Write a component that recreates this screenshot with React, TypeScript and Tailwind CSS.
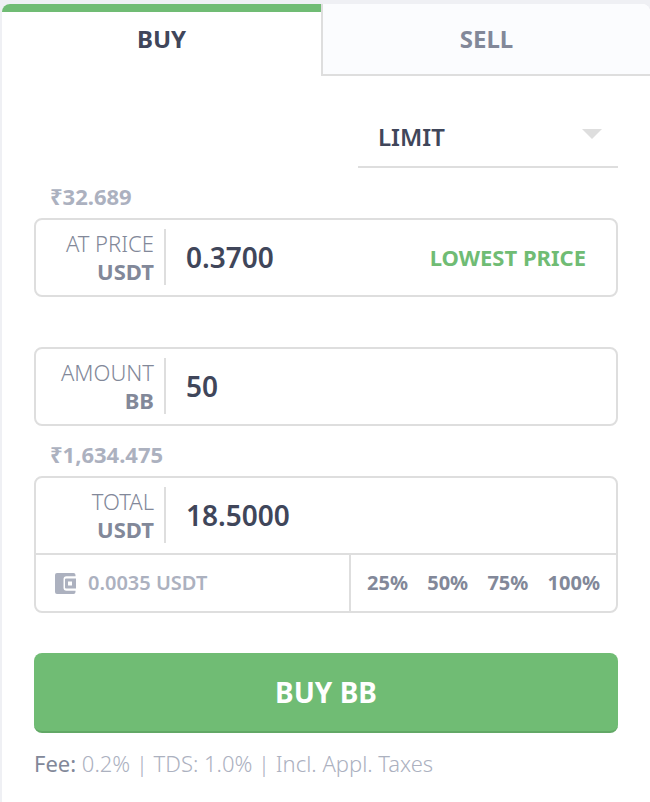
import React, { useState } from 'react';

interface FieldProps {
  id: string;
  label: string;
  unit: string;
  value: string;
  onChange: (value: string) => void;
  children?: React.ReactNode;
}

const PERCENTAGES = [25, 50, 75, 100];

const Field: React.FC<FieldProps> = ({ id, label, unit, value, onChange, children }) => (
  <div className="flex items-center pt-[9px] pb-2.5">
    <label
      htmlFor={id}
      className="w-[130px] shrink-0 pr-2.5 border-r-2 border-[#dedede] text-right text-[22px] leading-7 text-[#828899]"
    >
      <span className="block font-light">{label}</span>
      <span className="block font-bold">{unit}</span>
    </label>
    <input
      id={id}
      type="text"
      inputMode="decimal"
      value={value}
      onChange={e => onChange(e.target.value)}
      className="flex-1 min-w-0 pl-5 bg-transparent outline-none text-[28px] leading-9 font-semibold text-[#40465a]"
    />
    {children}
  </div>
);

const WalletIcon = () => (
  <svg width="21" height="21" viewBox="0 0 21 21" aria-hidden="true">
    <path
      fill="#acb1bf"
      fillRule="evenodd"
      d="M2 0h16.500a2 2 0 0 1 2 2v1.200H11.500a3 3 0 0 0-3 3v8.600a3 3 0 0 0 3 3h9V19a2 2 0 0 1-2 2H2a2 2 0 0 1-2-2V2a2 2 0 0 1 2-2zM11 5.500h10v10H11a1 1 0 0 1-1-1v-8a1 1 0 0 1 1-1zM13 8.500v4h4v-4z"
    />
  </svg>
);

export default function App() {
  const [side, setSide] = useState<'BUY' | 'SELL'>('BUY');
  const [orderType, setOrderType] = useState('LIMIT');
  const [price, setPrice] = useState('0.3700');
  const [amount, setAmount] = useState('50');
  const [total, setTotal] = useState('18.5000');

  const tabClass = (tab: 'BUY' | 'SELL') =>
    side === tab
      ? 'border-t-8 border-[#70bc74] text-[#40465a] pb-2.5'
      : `border-b-2 border-[#dedede] bg-[#fbfcfe] text-[#828899] ${tab === 'SELL' ? 'border-l-2' : 'border-r-2'}`;

  return (
    <div className="min-h-screen flex flex-col bg-[#eff0f4] pt-1 pl-0.5 font-['Noto_Sans',sans-serif]">
      <div className="flex-1 bg-white rounded-t-lg overflow-hidden">
        <div className="grid grid-cols-[319fr_329fr] h-18">
          <button type="button" onClick={() => setSide('BUY')} className={`text-2xl font-bold ${tabClass('BUY')}`}>
            BUY
          </button>
          <button type="button" onClick={() => setSide('SELL')} className={`text-2xl font-bold ${tabClass('SELL')}`}>
            SELL
          </button>
        </div>

        <form className="px-8 pt-8 pb-6" onSubmit={e => e.preventDefault()}>
          <div className="relative w-[260px] ml-auto">
            <select
              aria-label="Order type"
              value={orderType}
              onChange={e => setOrderType(e.target.value)}
              className="block w-full h-15 pl-5 pr-12 appearance-none bg-transparent outline-none border-b-2 border-[#dedede] text-2xl font-semibold text-[#40465a]"
            >
              <option value="LIMIT">LIMIT</option>
              <option value="MARKET">MARKET</option>
            </select>
            <svg className="absolute right-4 top-5 pointer-events-none" width="20" height="12" viewBox="0 0 20 12" aria-hidden="true">
              <path d="M0 1h20L10 11z" fill="#dedede" />
            </svg>
          </div>

          <p className="pt-3.5 pb-2 pl-4 text-[22px] leading-7 font-bold text-[#acb1bf]">₹32.689</p>
          <div className="border-2 border-[#dedede] rounded-lg">
            <Field id="price" label="AT PRICE" unit="USDT" value={price} onChange={setPrice}>
              <button type="button" onClick={() => setPrice('0.3700')} className="shrink-0 pr-[30px] text-[22px] leading-7 font-bold text-[#70bc74]">
                LOWEST PRICE
              </button>
            </Field>
          </div>

          <div className="mt-[50px] border-2 border-[#dedede] rounded-lg">
            <Field id="amount" label="AMOUNT" unit="BB" value={amount} onChange={setAmount} />
          </div>

          <p className="pt-3.5 pb-2 pl-4 text-[22px] leading-7 font-bold text-[#acb1bf]">₹1,634.475</p>
          <div className="border-2 border-[#dedede] rounded-lg">
            <Field id="total" label="TOTAL" unit="USDT" value={total} onChange={setTotal} />
            <div className="flex h-[58px] border-t-2 border-[#dedede] text-xl">
              <div className="flex-1 flex items-center gap-3 pl-[19px] font-semibold text-[#acb1bf]">
                <WalletIcon />
                <span>0.0035 USDT</span>
              </div>
              <div className="w-[267px] flex items-center justify-between px-4 border-l-2 border-[#dedede] font-bold text-[#828899]">
                {PERCENTAGES.map(pct => (
                  <button key={pct} type="button">{pct}%</button>
                ))}
              </div>
            </div>
          </div>

          <button
            type="submit"
            className="block w-full h-20 mt-10 rounded-lg bg-[#70bc74] border-b-2 border-[#62a866] text-[28px] leading-9 font-bold text-white"
          >
            {side} BB
          </button>

          <p className="mt-4 text-[22px] leading-7 font-light text-[#acb1bf]">
            <span className="font-normal text-[#828899]">Fee:</span> 0.2% | TDS: 1.0% | Incl. Appl. Taxes
          </p>
        </form>
      </div>
    </div>
  );
}
